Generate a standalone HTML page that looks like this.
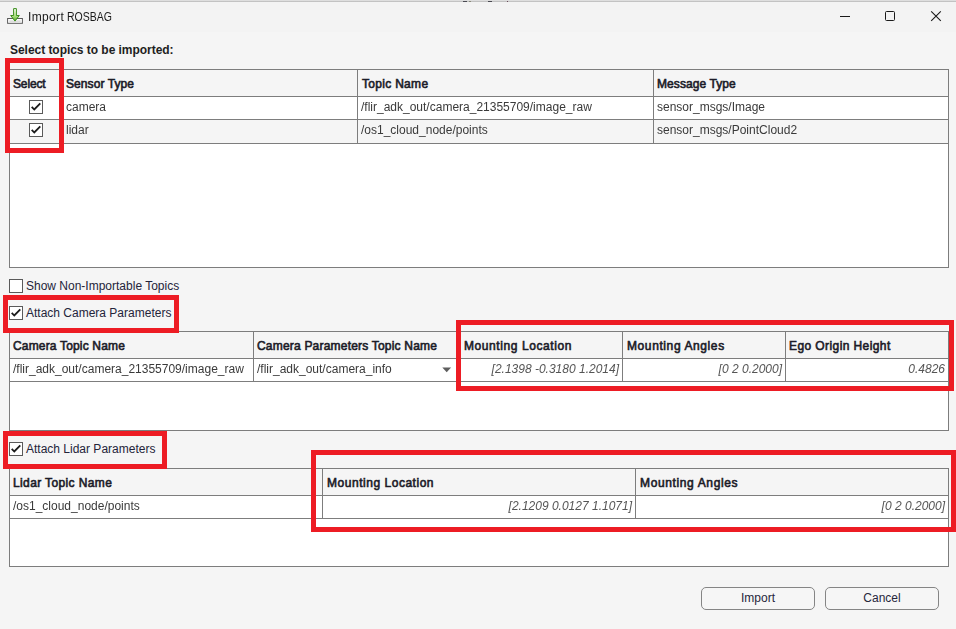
<!DOCTYPE html>
<html>
<head>
<meta charset="utf-8">
<title>Import ROSBAG</title>
<style>
html,body{margin:0;padding:0;}
body{width:956px;height:629px;overflow:hidden;background:#f5f5f5;font-family:"Liberation Sans",sans-serif;font-size:12px;color:#333;position:relative;}
.abs{position:absolute;}
.titlebar{left:0;top:0;width:956px;height:32px;background:#f3f3f3;}
.topstrip{left:0;top:0;width:956px;height:2px;background:linear-gradient(#dedede 0,#dedede 50%,#bdbdbd 50%,#c8c8c8 100%);}
.title{left:28px;top:9px;font-size:12px;will-change:transform;color:#1b1b1b;white-space:nowrap;line-height:16px;}
.lbl{white-space:nowrap;line-height:14px;color:#24243a;}
.b{font-weight:bold;}
.tbl{border:1px solid #7d7d7d;background:#fff;box-sizing:border-box;}
.hdr{background:#f5f5f5;border-bottom:1px solid #7d7d7d;box-sizing:border-box;}
.row{border-bottom:1px solid #7d7d7d;box-sizing:border-box;}
.alt{background:#f5f5f5;}
.vl{width:1px;background:#7d7d7d;}
.h{font-weight:normal;-webkit-text-stroke:0.6px #1c1c28;font-size:12px;color:#1c1c28;white-space:nowrap;line-height:14px;}
.c{font-size:12px;color:#3a3a3a;white-space:nowrap;line-height:14px;will-change:transform;}
.i{font-style:italic;color:#555;text-align:right;}
.cb{width:14px;height:14px;box-sizing:border-box;border:1px solid #5a5a5a;background:#fff;}
.red{border:5px solid #ed1c24;box-sizing:border-box;}
.btn{border:1px solid #858585;border-radius:5px;background:#f6f6f6;box-sizing:border-box;text-align:center;font-size:12px;color:#26263c;line-height:21px;}
</style>
</head>
<body>
<div class="abs titlebar"></div>
<div class="abs topstrip"></div>
<div class="abs" style="left:463px;top:1px;width:4px;height:1px;background:#4a4a52;"></div>
<div class="abs" style="left:469px;top:1px;width:2px;height:1px;background:#8a8a7a;"></div>
<div class="abs" style="left:488px;top:1px;width:4px;height:1px;background:#4a4a52;"></div>
<div class="abs" style="left:507px;top:1px;width:1px;height:1px;background:#6a4a5a;"></div>

<!-- title icon -->
<svg class="abs" style="left:6px;top:7px" width="18" height="18" viewBox="0 0 18 18">
  <defs>
    <linearGradient id="ga" x1="0" y1="0" x2="0" y2="1"><stop offset="0" stop-color="#ffffff"/><stop offset="0.55" stop-color="#b7e58c"/><stop offset="1" stop-color="#4fae22"/></linearGradient>
  </defs>
  <rect x="1.6" y="11.5" width="14.8" height="4.8" fill="#ffffff" stroke="#5a5a5a" stroke-width="1"/>
  <path d="M3.3 14.1h11.4" stroke="#c9c9c9" stroke-width="1.1"/>
  <path d="M7.6 1.6h2.8v6.9h2.9l-4.3 5.6-4.3-5.600h2.9z" fill="url(#ga)" stroke="#3c8f1c" stroke-width="1" stroke-linejoin="miter"/>
</svg>
<div class="abs title"><span style="letter-spacing:0.36px">Import</span> <span style="display:inline-block;transform:scaleX(0.875);transform-origin:0 50%;margin-left:-0.6px">ROSBAG</span></div>

<!-- window controls -->
<svg class="abs" style="left:830px;top:4px" width="120" height="24" viewBox="0 0 120 24">
  <path d="M10 12.5h10" stroke="#1a1a1a" stroke-width="1" fill="none"/>
  <rect x="55.5" y="7.5" width="9" height="9" rx="1" fill="none" stroke="#1a1a1a" stroke-width="1"/>
  <path d="M101.2 7.3L110.8 16.9M110.8 7.3L101.2 16.9" stroke="#1a1a1a" stroke-width="1.1" fill="none"/>
</svg>

<div class="abs lbl b" style="left:10px;top:43px;letter-spacing:-0.04px;color:#1e1e22;">Select topics to be imported:</div>

<!-- TABLE 1 -->
<div class="abs tbl" style="left:9px;top:69px;width:940px;height:199px;"></div>
<div class="abs hdr" style="left:10px;top:70px;width:938px;height:27px;"></div>
<div class="abs row" style="left:10px;top:97px;width:938px;height:23px;background:#fff;"></div>
<div class="abs row alt" style="left:10px;top:120px;width:938px;height:24px;"></div>
<div class="abs vl" style="left:62px;top:70px;height:74px;"></div>
<div class="abs vl" style="left:357px;top:70px;height:74px;"></div>
<div class="abs vl" style="left:653px;top:70px;height:74px;"></div>
<div class="abs h" style="left:13px;top:77px;letter-spacing:-0.15px;">Select</div>
<div class="abs h" style="left:66px;top:77px;letter-spacing:0.08px;">Sensor Type</div>
<div class="abs h" style="left:362px;top:77px;letter-spacing:0.3px;">Topic Name</div>
<div class="abs h" style="left:657px;top:77px;letter-spacing:0.08px;">Message Type</div>
<div class="abs c" style="left:66px;top:100px;">camera</div>
<div class="abs c" style="left:361px;top:100px;">/flir_adk_out/camera_21355709/image_raw</div>
<div class="abs c" style="left:657px;top:100px;">sensor_msgs/Image</div>
<div class="abs c" style="left:66px;top:123px;">lidar</div>
<div class="abs c" style="left:361px;top:123px;">/os1_cloud_node/points</div>
<div class="abs c" style="left:657px;top:123px;">sensor_msgs/PointCloud2</div>
<div class="abs cb" style="left:29px;top:100px;"></div>
<svg class="abs" style="left:29px;top:100px" width="14" height="14" viewBox="0 0 14 14"><path d="M2.7 6.8L5.3 9.5L11.3 3.3" stroke="#1a1a1a" stroke-width="1.8" fill="none"/></svg>
<div class="abs cb" style="left:29px;top:123px;"></div>
<svg class="abs" style="left:29px;top:123px" width="14" height="14" viewBox="0 0 14 14"><path d="M2.7 6.8L5.3 9.5L11.3 3.3" stroke="#1a1a1a" stroke-width="1.8" fill="none"/></svg>

<!-- checkboxes -->
<div class="abs cb" style="left:9px;top:279px;"></div>
<div class="abs lbl" style="left:26px;top:279px;">Show Non-Importable Topics</div>

<div class="abs cb" style="left:9px;top:306px;"></div>
<svg class="abs" style="left:9px;top:306px" width="14" height="14" viewBox="0 0 14 14"><path d="M2.7 6.8L5.3 9.5L11.3 3.3" stroke="#1a1a1a" stroke-width="1.8" fill="none"/></svg>
<div class="abs lbl" style="left:26px;top:306px;">Attach Camera Parameters</div>

<!-- TABLE 2 -->
<div class="abs tbl" style="left:9px;top:331px;width:940px;height:100px;"></div>
<div class="abs hdr" style="left:10px;top:332px;width:938px;height:27px;"></div>
<div class="abs row" style="left:10px;top:359px;width:938px;height:23px;background:#fff;"></div>
<div class="abs vl" style="left:253px;top:332px;height:50px;"></div>
<div class="abs vl" style="left:459px;top:332px;height:50px;"></div>
<div class="abs vl" style="left:622px;top:332px;height:50px;"></div>
<div class="abs vl" style="left:785px;top:332px;height:50px;"></div>
<div class="abs h" style="left:13px;top:339px;letter-spacing:0.17px;">Camera Topic Name</div>
<div class="abs h" style="left:257px;top:339px;letter-spacing:0.2px;">Camera Parameters Topic Name</div>
<div class="abs h" style="left:464px;top:339px;letter-spacing:0.58px;">Mounting Location</div>
<div class="abs h" style="left:627px;top:339px;letter-spacing:0.6px;">Mounting Angles</div>
<div class="abs h" style="left:789px;top:339px;letter-spacing:0.41px;">Ego Origin Height</div>
<div class="abs c" style="left:13px;top:362px;">/flir_adk_out/camera_21355709/image_raw</div>
<div class="abs c" style="left:257px;top:362px;">/flir_adk_out/camera_info</div>
<svg class="abs" style="left:442px;top:367px" width="10" height="6" viewBox="0 0 10 6"><path d="M0.3 0.6h8.8l-4.4 4.6z" fill="#5e5e5e"/></svg>
<div class="abs c i" style="left:463px;top:362px;width:156px;">[2.1398 -0.3180 1.2014]</div>
<div class="abs c i" style="left:626px;top:362px;width:156px;">[0 2 0.2000]</div>
<div class="abs c i" style="left:789px;top:362px;width:156px;">0.4826</div>

<div class="abs cb" style="left:9px;top:442px;"></div>
<svg class="abs" style="left:9px;top:442px" width="14" height="14" viewBox="0 0 14 14"><path d="M2.7 6.8L5.3 9.5L11.3 3.3" stroke="#1a1a1a" stroke-width="1.8" fill="none"/></svg>
<div class="abs lbl" style="left:26px;top:442px;">Attach Lidar Parameters</div>

<!-- TABLE 3 -->
<div class="abs tbl" style="left:9px;top:468px;width:940px;height:99px;"></div>
<div class="abs hdr" style="left:10px;top:469px;width:938px;height:27px;"></div>
<div class="abs row" style="left:10px;top:496px;width:938px;height:23px;background:#fff;"></div>
<div class="abs vl" style="left:322px;top:469px;height:50px;"></div>
<div class="abs vl" style="left:635px;top:469px;height:50px;"></div>
<div class="abs h" style="left:13px;top:476px;letter-spacing:0.38px;">Lidar Topic Name</div>
<div class="abs h" style="left:327px;top:476px;letter-spacing:0.53px;">Mounting Location</div>
<div class="abs h" style="left:640px;top:476px;letter-spacing:0.63px;">Mounting Angles</div>
<div class="abs c" style="left:13px;top:499px;">/os1_cloud_node/points</div>
<div class="abs c i" style="left:327px;top:499px;width:305px;">[2.1209 0.0127 1.1071]</div>
<div class="abs c i" style="left:639px;top:499px;width:306px;">[0 2 0.2000]</div>

<!-- buttons -->
<div class="abs btn" style="left:701px;top:587px;width:114px;height:23px;">Import</div>
<div class="abs btn" style="left:825px;top:587px;width:114px;height:23px;">Cancel</div>

<!-- red annotation boxes -->
<div class="abs red" style="left:5px;top:58px;width:59px;height:95px;"></div>
<div class="abs red" style="left:3px;top:295px;width:176px;height:38px;"></div>
<div class="abs red" style="left:456px;top:320px;width:498px;height:71px;"></div>
<div class="abs red" style="left:3px;top:431px;width:164px;height:38px;"></div>
<div class="abs red" style="left:311px;top:450px;width:645px;height:82px;"></div>
</body>
</html>
